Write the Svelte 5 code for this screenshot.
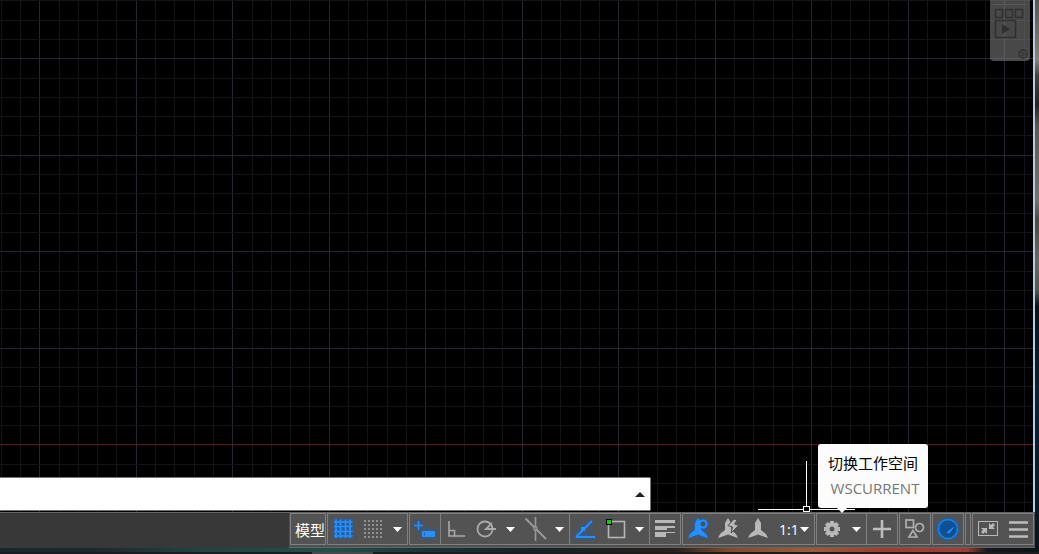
<script>
    let command = $state("");
    let scale = $state("1:1");
    let paper = $state(false);

    // grid spacing of the drawing area, every fifth line is a major one
    const step = 19.3;
    const originX = 39.2;
    const originY = 444.2;

    const columns = [];
    for (let i = -2; i < 140; i++) {
        columns.push({ pos: Math.round(originX + i * step), major: i % 5 === 0 });
    }

    const rows = [];
    for (let i = -23; i < 60; i++) {
        rows.push({ pos: Math.round(originY + i * step), major: i % 5 === 0 });
    }

    const gridLines = [-7, -2.5, 2.5, 7];
    const dots = [-8, -4, 0, 4, 8];
    const teeth = [0, 45, 90, 135, 180, 225, 270, 315];
    const tripod = "M0 -11L-3 -6V1L-8 5L-10 9L-4 7L0 5.5L4 7L10 9L8 5L3 1V-6Z";
</script>

{#snippet arrow(label)}
    <button class="more" aria-label={label}>
        <svg width="9" height="5" viewBox="0 0 9 5"><path d="M0 0H9L4.5 5Z" fill="#fff" /></svg>
    </button>
{/snippet}

<div class="desktop">
    <div class="window">
        <main class="drawing">
            <svg class="canvas" width="100%" height="100%" shape-rendering="crispEdges">
                {#each columns as c}
                    <rect x={c.pos} y="0" width="1" height="100%" fill={c.major ? "#272732" : "#141418"} />
                {/each}
                {#each rows as r}
                    <rect x="0" y={r.pos} width="100%" height="1" fill={r.major ? "#272732" : "#141418"} />
                {/each}
                <rect x="0" y={Math.round(originY)} width="100%" height="1" fill="#5c1519" />
                <path d="M806 461H807V506H806ZM758 509H804V510H758ZM809 509H855V510H809Z" fill="#fff" />
                <rect x="803" y="506" width="7" height="6" fill="#fff" />
                <rect x="804" y="507" width="5" height="4" fill="#000" />
            </svg>

            <button class="navbar" aria-label="ShowMotion">
                <svg width="40" height="61" viewBox="0 0 40 61" fill="none" stroke="#303030" stroke-width="1.5">
                    <path d="M3 4.5H36" stroke="#595959" stroke-width="1" />
                    <rect x="5.5" y="9.5" width="7" height="8" />
                    <rect x="15.5" y="9.5" width="7" height="8" />
                    <rect x="25.5" y="9.5" width="7" height="8" />
                    <rect x="5.5" y="20.5" width="20" height="17" />
                    <path d="M12 24L20 29L12 34Z" fill="#303030" stroke="none" />
                    <circle cx="33" cy="54" r="4" />
                    <path d="M31 53H35M31 55H35" stroke-width="1" />
                </svg>
            </button>

            <div class="command">
                <input type="text" aria-label="命令" bind:value={command} />
                <button aria-label="历史记录">
                    <svg width="10" height="5" viewBox="0 0 10 5"><path d="M5 0L10 5H0Z" fill="#222" /></svg>
                </button>
            </div>
        </main>

        <footer class="status">
            <div class="panels">
                <div class="group">
                    <button class="model" onclick={() => (paper = !paper)}>{paper ? "图纸" : "模型"}</button>
                </div>

                <div class="group">
                    <button class="on" aria-label="栅格">
                        <svg viewBox="-15 -15 30 30" stroke="currentColor" stroke-width="1.7">
                            {#each gridLines as p}
                                <path d="M{p} -9.5V9M-9 {p}H9.5" />
                            {/each}
                        </svg>
                    </button>
                    <button aria-label="捕捉">
                        <svg viewBox="-15 -15 30 30" fill="#909090">
                            {#each dots as x}
                                {#each dots as y}
                                    <rect x={x - 1} y={y - 1} width="2" height="2" />
                                {/each}
                            {/each}
                        </svg>
                    </button>
                    {@render arrow("捕捉设置")}
                </div>

                <div class="group">
                    <button class="on" aria-label="动态输入">
                        <svg viewBox="-15 -15 30 30">
                            <path d="M-6.5 -8V1M-11 -3.5H-2" stroke="currentColor" stroke-width="1.5" />
                            <rect x="-3" y="2" width="13" height="6" rx="1" fill="currentColor" />
                            <path d="M-0.5 3.5V6.5" stroke="#2c5f96" />
                        </svg>
                    </button>
                    <span class="divider"></span>
                    <button aria-label="正交">
                        <svg viewBox="-15 -15 30 30" fill="none" stroke="#aaa" stroke-width="1.6">
                            <path d="M-7 -8V7H9M-7 1.5H-1.5V7" />
                        </svg>
                    </button>
                    <button aria-label="极轴追踪">
                        <svg viewBox="-15 -15 30 30" fill="none" stroke="#aaa" stroke-width="1.8">
                            <circle cx="-1" cy="0" r="7.5" />
                            <path d="M10 0H0L6 -6" />
                        </svg>
                    </button>
                    {@render arrow("极轴追踪设置")}
                    <button aria-label="等轴测草图">
                        <svg viewBox="-15 -15 30 30" fill="none" stroke="#999" stroke-width="1.6">
                            <path d="M0.5 -12V12" />
                            <path d="M-9.5 -10.5L11 10" stroke-width="2" />
                            <rect x="-1" y="-2" width="3" height="3" fill="#777" stroke-width="1" />
                        </svg>
                    </button>
                    {@render arrow("等轴测设置")}
                    <span class="divider"></span>
                    <button class="on" aria-label="对象捕捉追踪">
                        <svg viewBox="-15 -15 30 30" stroke="currentColor">
                            <path d="M-9 8H10M-9 8L7 -8" stroke-width="1.8" fill="none" />
                            <rect x="-4" y="-2" width="4" height="4" fill="currentColor" stroke="none" />
                        </svg>
                    </button>
                    <button aria-label="对象捕捉">
                        <svg viewBox="-15 -15 30 30">
                            <rect x="-6.5" y="-7.5" width="16" height="16" fill="none" stroke="#b4b4b4" stroke-width="1.6" />
                            <rect x="-8.5" y="-9.5" width="5" height="5" fill="#00d900" stroke="#000" />
                        </svg>
                    </button>
                    {@render arrow("对象捕捉设置")}
                    <span class="divider"></span>
                    <button aria-label="线宽">
                        <svg viewBox="-15 -15 30 30" fill="#b8b8b8">
                            <rect x="-10" y="-9" width="20" height="3" />
                            <rect x="-10" y="-3" width="20" height="2" />
                            <rect x="-10" y="-3" width="12" height="4" />
                            <rect x="-10" y="3" width="20" height="1" />
                            <rect x="-10" y="3" width="11" height="5" />
                        </svg>
                    </button>
                </div>

                <div class="group">
                    <button class="on" aria-label="注释可见性">
                        <svg viewBox="-15 -15 30 30" fill="currentColor">
                            <path d={tripod} />
                            <circle cx="5" cy="-5" r="3.5" fill="#3f5268" stroke="currentColor" stroke-width="2" />
                        </svg>
                    </button>
                    <button aria-label="自动缩放">
                        <svg viewBox="-15 -15 30 30" fill="#b8b8b8">
                            <path d={tripod} />
                            <path d="M6 -10L0 -3.5L4.5 -2L3 4L10.5 -3.5L6.5 -5L9 -9Z" stroke="#535353" stroke-width="1" />
                        </svg>
                    </button>
                    <button aria-label="注释比例">
                        <svg viewBox="-15 -15 30 30" fill="#b8b8b8">
                            <path d={tripod} />
                        </svg>
                    </button>
                    <label class="scale">
                        <select aria-label="视图注释比例" bind:value={scale}>
                            <option>1:1</option>
                            <option>1:2</option>
                            <option>1:4</option>
                        </select>
                        <svg width="9" height="5" viewBox="0 0 9 5"><path d="M0 0H9L4.5 5Z" fill="#fff" /></svg>
                    </label>
                </div>

                <div class="group">
                    <div class="workspace">
                        <button aria-label="切换工作空间" aria-describedby="tip">
                            <svg viewBox="-15 -15 30 30" fill="#b8b8b8">
                                {#each teeth as deg}
                                    <rect x="-2" y="-8" width="4" height="5" transform="rotate({deg})" />
                                {/each}
                                <circle r="4.5" fill="none" stroke="#b8b8b8" stroke-width="4" />
                            </svg>
                        </button>
                        <div class="tooltip" id="tip" role="tooltip">
                            <strong>切换工作空间</strong>
                            <span>WSCURRENT</span>
                        </div>
                    </div>
                    {@render arrow("工作空间设置")}
                    <span class="divider"></span>
                    <button aria-label="注释监视器">
                        <svg viewBox="-15 -15 30 30"><path d="M0 -9V9M-9 0H9" stroke="#bdbdbd" stroke-width="2.6" /></svg>
                    </button>
                </div>

                <div class="group">
                    <button aria-label="隔离对象">
                        <svg viewBox="-15 -15 30 30" fill="none" stroke="#b0b0b0" stroke-width="1.7">
                            <rect x="-9" y="-9" width="7.5" height="7.5" />
                            <circle cx="4.5" cy="-1.5" r="4" />
                            <path d="M-2 1.5L-6 8H2Z" />
                        </svg>
                    </button>
                </div>

                <div class="group">
                    <button class="on" aria-label="硬件加速">
                        <svg viewBox="-15 -15 30 30">
                            <circle r="9.5" fill="#0d5093" stroke="#1a80e6" stroke-width="1.6" />
                            <path d="M-1 3.5L5.5 -1.5L1 4Z" fill="currentColor" stroke="currentColor" />
                        </svg>
                    </button>
                </div>

                <div class="group grip"></div>

                <div class="group">
                    <button aria-label="全屏显示">
                        <svg viewBox="-15 -15 30 30" fill="#b8b8b8">
                            <rect x="-9.5" y="-7.5" width="19" height="14" fill="none" stroke="#b8b8b8" />
                            <path d="M-7 -1H-1V5L-3 3L-5 5L-7 3L-5 1Z" />
                            <path d="M1 -6V0H7L5 -2L7 -4L5 -6L3 -4Z" />
                        </svg>
                    </button>
                    <button aria-label="自定义">
                        <svg viewBox="-15 -15 30 30"><path d="M-9 -6.5H10M-9 0.5H10M-9 7.5H10" stroke="#bcbcbc" stroke-width="2.4" /></svg>
                    </button>
                </div>
            </div>
        </footer>
    </div>
    <div class="side"></div>
    <div class="bottom"><span></span></div>
</div>

<style>
    :global(body) {
        margin: 0;
        background: #181818;
    }

    .desktop {
        display: grid;
        grid-template-columns: 1fr 4px;
        grid-template-rows: 1fr 6px;
        height: 100vh;
        font-family: "Open Sans", "Noto Sans CJK SC", sans-serif;
        font-size: 15px;
    }

    .window {
        display: flex;
        flex-direction: column;
        min-width: 0;
    }

    .drawing {
        display: flex;
        flex-direction: column;
        justify-content: flex-end;
        position: relative;
        flex-grow: 1;
        padding-bottom: 1px;
        background: #000;
        border-right: 2px solid #b4cde8;
    }

    .canvas {
        position: absolute;
        left: 0;
        top: 0;
    }

    button {
        display: flex;
        align-items: center;
        justify-content: center;
        padding: 0;
        border: 0;
        background: none;
        color: inherit;
        font: inherit;
    }

    .navbar {
        position: absolute;
        top: 0;
        right: 3px;
        border-radius: 0 0 4px 4px;
        background: rgba(132, 132, 132, 0.55);
    }

    .command {
        display: flex;
        position: relative;
        box-sizing: border-box;
        width: 63%;
        height: 34px;
        background: #fff;
        border: 1px solid #777;
        border-left: 0;
        border-radius: 0 2px 2px 0;
    }

    .command input {
        flex-grow: 1;
        min-width: 0;
        padding: 0 8px;
        border: 0;
        outline: 0;
        background: none;
        font: inherit;
    }

    .command button {
        width: 20px;
    }

    .status {
        display: flex;
        justify-content: flex-end;
        background: #383838;
        border-top: 1px solid #626262;
        color: #fff;
    }

    .panels {
        display: flex;
        gap: 1px;
        padding: 0 1px 2px;
        background: #505050;
        border-bottom: 1px solid #666;
    }

    .group {
        display: flex;
        height: 30px;
        border: 1px solid #808080;
        background: #535353;
    }

    .group button {
        width: 30px;
    }

    .group button svg {
        flex-shrink: 0;
    }

    .group button:not(.more) svg {
        width: 30px;
        height: 30px;
    }

    .group .more {
        width: 19px;
    }

    .group .model {
        justify-content: flex-start;
        width: 34px;
        padding-left: 4px;
    }

    .on {
        color: #2491ff;
    }

    .on svg {
        filter: drop-shadow(0 0 2px #0865d8);
    }

    .divider {
        width: 1px;
        background: #808080;
    }

    .grip {
        width: 4px;
    }

    .scale {
        display: flex;
        align-items: center;
        width: 41px;
    }

    .scale select {
        appearance: none;
        width: 27px;
        padding: 0 0 0 6px;
        border: 0;
        outline: 0;
        background: none;
        color: #fff;
        font: inherit;
        font-size: 14px;
    }

    .workspace {
        position: relative;
    }

    .tooltip {
        display: flex;
        flex-direction: column;
        align-items: center;
        position: absolute;
        left: 1px;
        bottom: 36px;
        box-sizing: border-box;
        width: 110px;
        padding: 7px 0;
        border-radius: 3px;
        background: #fcfcfc;
        color: #000;
        line-height: 25px;
    }

    .tooltip::after {
        content: "";
        position: absolute;
        left: 19px;
        top: 100%;
        border: 5px solid transparent;
        border-top-color: #fcfcfc;
        border-bottom: 0;
    }

    .tooltip strong {
        font-weight: 400;
    }

    .tooltip span {
        padding-left: 4px;
        color: #767676;
    }

    .side {
        background: linear-gradient(#5d5552, #8a807c 60px, #46403d 76px, #2c2020 105px, #5e5855 125px, #77736e 200px, #504841 220px, #6b6861 260px, #555850 290px, #0b1216 306px, #10202c 400px, #0a141b);
    }

    .bottom {
        grid-column: 1 / -1;
        padding-top: 4px;
        background:
            linear-gradient(#1d1b1b, #1d1b1b) 0 4px / 100% 2px no-repeat,
            linear-gradient(90deg, #1c2529, #1e2a2e 10%, #1d4542 19%, #20504c 32%, #173338 42%, #142225 52%, #2a211d 65%, #7d4b2c 70%, #9c5c39 78%, #a33c2b 85%, #a13e35 93%, #15191d 95%, #0c1318);
    }

    .bottom span {
        display: block;
        width: 61px;
        height: 2px;
        margin-left: 30%;
        background: #484848;
    }
</style>
